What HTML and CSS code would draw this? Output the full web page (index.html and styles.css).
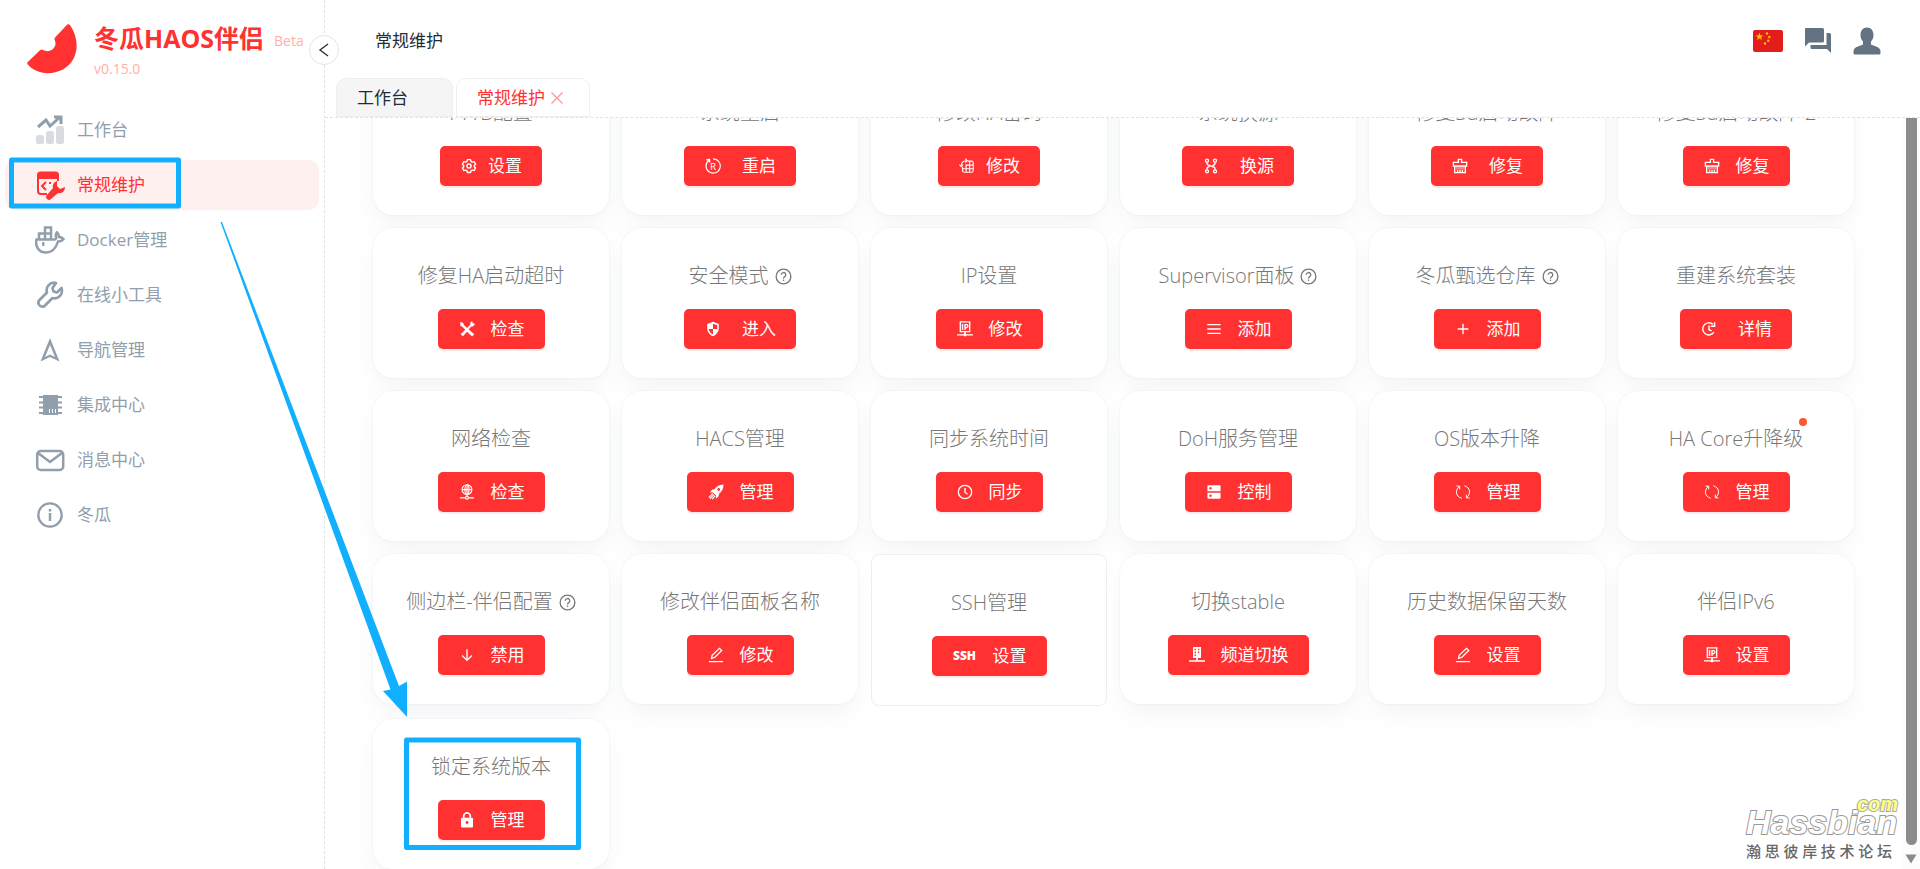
FILE: index.html
```html
<!DOCTYPE html>
<html lang="zh-CN">
<head>
    <meta charset="UTF-8">
    <meta name="viewport" content="width=device-width, initial-scale=1.0">
    <title>冬瓜HAOS伴侣</title>
    <link rel="stylesheet" href="styles.css">
</head>
<body>
    <!-- shared icons -->
    <svg class="sprite" aria-hidden="true">
        <symbol id="i-help" viewBox="0 0 18 18"><g fill="none" stroke="currentColor" stroke-width="1.4"><circle cx="9" cy="9" r="7.8"/><path d="M6.6 7.2a2.4 2.4 0 1 1 3.4 2.2c-.7.4-1 .8-1 1.6"/><path d="M9 12.2v1.5"/></g></symbol>
        <symbol id="i-gear" viewBox="0 0 18 18"><g fill="none" stroke="currentColor" stroke-width="1.6" stroke-linejoin="round"><path d="M7.3 1.8h3.4l.6 2 1.3.8 2.1-.5 1.7 2.9-1.5 1.5v1.2l1.5 1.5-1.7 2.9-2.1-.5-1.3.8-.6 2H7.3l-.6-2-1.3-.8-2.1.5-1.7-2.900 1.500-1.500V8.500L1.600 7l1.700-2.900 2.100.5 1.300-.8z"/><circle cx="9" cy="9" r="2.300"/></g></symbol>
        <symbol id="i-swapgrid" viewBox="0 0 18 18"><g fill="none" stroke="currentColor" stroke-width="1.200"><path d="M10 3.500h4a2 2 0 0 1 2 2V14a2 2 0 0 1-2 2H6a2 2 0 0 1-2-2v-4M4 12h12M8 8h8M8 7v9M12 3.500V16"/><path d="M2.500 9.500c0-4 2-6.500 6-6.500M7 .8L9.400 3 7 5.200M.5 7.500l2 2.300 2-2.300"/></g></symbol>
        <symbol id="i-branch" viewBox="0 0 18 18"><g fill="none" stroke="currentColor" stroke-width="1.500"><circle cx="4.500" cy="3" r="1.700"/><circle cx="13.500" cy="3" r="1.700"/><circle cx="4.500" cy="15" r="1.700"/><circle cx="13.500" cy="15" r="1.700"/><path d="M4.500 4.700v1.500c0 3.300 9 2.300 9 5.600v1.500M13.500 4.700v1.500c0 1.400-1.400 2-3 2.400M4.500 13.300v-1.500c0-1.400 1.400-2 3-2.400"/></g></symbol>
        <symbol id="i-clear" viewBox="0 0 18 18"><path d="M7.200 5V1.500h3.600V5H16.500v4h-15V5zM3 9v7.500h12V9M6.300 16v-2.500M9 16v-2.500M11.700 16v-2.500" fill="none" stroke="currentColor" stroke-width="1.500"/><path d="M4 9h10v4H4z" fill="currentColor" opacity=".4"/></symbol>
        <symbol id="i-tools" viewBox="0 0 18 18"><path d="M1.500 1.500l3 .8.8 2.200L9 8.100l4-4-.2-2.200 2-1.400.4 2.400 2.300.3-1.300 2.500-2.200.2-3.400 3.500 6.200 5.600-2 2.200L9 11.700l-4.600 5.300-2.300-2.100L7.300 9.800 3.700 6.200l-1.800-.8z" fill="currentColor" stroke="currentColor" stroke-width=".5"/></symbol>
        <symbol id="i-shield" viewBox="0 0 18 18"><path fill-rule="evenodd" d="M9 .8l6.500 2.500v4.900c0 4.300-2.800 7.300-6.500 9-3.700-1.700-6.500-4.700-6.500-9V3.300zM9 3v6H4.200c.4 2.900 2.100 4.900 4.800 6.200V9h4.800V4.800z" fill="currentColor"/></symbol>
        <symbol id="i-server" viewBox="0 0 18 18"><path fill-rule="evenodd" d="M4.500 0h9v12.500H10v2.300h8v1.700H0v-1.700h8v-2.300H4.500zM6.300 2v1.700h1.500V2zm0 3.200v1.700h1.500V5.200zm0 3.200v1.700h1.500V8.400zM10 2v1.700h1.500V2zm0 3.200v1.700h1.500V5.200z" fill="currentColor"/></symbol>
        <symbol id="i-menu" viewBox="0 0 18 18"><path d="M1.500 4h15M1.500 9h15M1.500 14h15" stroke="currentColor" stroke-width="1.500"/></symbol>
        <symbol id="i-plus" viewBox="0 0 18 18"><path d="M9 3v12M3 9h12" stroke="currentColor" stroke-width="1.500"/></symbol>
        <symbol id="i-history" viewBox="0 0 18 18"><path d="M14.500 12.500A6.800 6.800 0 1 1 13.300 3.800M15.300 1.500v4.500h-4.500M9 5v4.800l3 1.400" fill="none" stroke="currentColor" stroke-width="1.600"/></symbol>
        <symbol id="i-net" viewBox="0 0 18 18"><g fill="none" stroke="currentColor" stroke-width="1.300"><circle cx="9" cy="6.300" r="5.500"/><ellipse cx="9" cy="6.300" rx="2.300" ry="5.500"/><path d="M3.500 6.300h11M9 .8V14M1 15.600h6.200M10.800 15.600H17"/><circle cx="9" cy="15.500" r="1.600"/></g></symbol>
        <symbol id="i-rocket" viewBox="0 0 18 18"><path fill-rule="evenodd" d="M17.500.5c-4.800.2-8 2-10.200 5.300L4.500 6.500 2 9.500l3.300-.3 3.800 3.700-.3 3.600 3-2.500.7-3C15.600 8.600 17.500 5.200 17.500.5zM12 4.500a1.600 1.600 0 1 0 .1 0z" fill="currentColor"/><path d="M5.500 10.500L1 15M6.500 12L2 16.700M8 13.200L4.700 17" stroke="currentColor" stroke-width="1.400"/></symbol>
        <symbol id="i-clock" viewBox="0 0 18 18"><path d="M9 4.500V9.500l3.200 2" fill="none" stroke="currentColor" stroke-width="1.500"/><circle cx="9" cy="9" r="7.500" fill="none" stroke="currentColor" stroke-width="1.500"/></symbol>
        <symbol id="i-disk" viewBox="0 0 18 18"><path fill-rule="evenodd" d="M2.500 1.500h13a.9.900 0 0 1 .9.900V8.200H1.600V2.400a.9.900 0 0 1 .9-.9zM5 3.500a1.400 1.400 0 1 0 .1 0zM1.600 9.800h14.800v5.800a.9.900 0 0 1-.9.900h-13a.9.900 0 0 1-.9-.9zM5 11.700a1.400 1.400 0 1 0 .1 0z" fill="currentColor"/></symbol>
        <symbol id="i-sync" viewBox="0 0 18 18"><g fill="none" stroke="currentColor" stroke-width="1.100"><path d="M7.500 16C.5 14.500 0 6 5 2.800M10.500 2C17.500 3.500 18 12 13 15.200"/><path d="M1.700 2.300l3.600.2v3.600M16.300 15.700l-3.600-.2v-3.600"/></g></symbol>
        <symbol id="i-down" viewBox="0 0 18 18"><path d="M9 2.500v12.500M3.500 9.500L9 15l5.500-5.500" fill="none" stroke="currentColor" stroke-width="1.500"/></symbol>
        <symbol id="i-edit" viewBox="0 0 18 18"><path d="M4 12.800l.7-3.500 8.200-7.800 2.500 2.500-7.900 7.800zM1 16.500h16" fill="none" stroke="currentColor" stroke-width="1.500"/></symbol>
        <symbol id="i-lock" viewBox="0 0 18 18"><path d="M5.300 8V4.600a3.700 3.700 0 0 1 7.400 0V8" fill="none" stroke="currentColor" stroke-width="1.900"/><path fill-rule="evenodd" d="M3.500 6.500h11a1.300 1.300 0 0 1 1.300 1.300v8.400a1.300 1.300 0 0 1-1.300 1.300h-11a1.300 1.300 0 0 1-1.300-1.300V7.800a1.300 1.300 0 0 1 1.300-1.300zM9 10.200a1.700 1.700 0 1 0 .1 0z" fill="currentColor"/></symbol>
    </svg>

    <div class="app">
        <aside class="sidebar">
            <div class="brand">
                <svg class="logo" viewBox="0 0 50 50"><path d="M40.500.3c1-.3 2 .2 2.600 1C54 17 51 37 36 45.500 23 52 8 49.500.6 40.300c-.6-.8-.5-1.600.2-2.300L13 26.300c1-.9 2.100-.9 3.100-.2C22 29 28 25.500 28.500 20c.1-2-.7-3.500-1-4.500-.2-1 .2-1.800 1-2.600z" fill="#ff3131"/></svg>
                <div>
                    <div class="brand-line"><span class="brand-name">冬瓜HAOS伴侣</span><span class="brand-note">Beta</span></div>
                    <div class="brand-note">v0.15.0</div>
                </div>
            </div>
            <nav class="menu">
                <a href="#"><svg viewBox="0 0 30 30"><path d="M3 12l8-7 4 6 9-8M19 2h7v7" fill="none" stroke="currentColor" stroke-width="3"/><g fill="currentColor" opacity=".35"><rect x="1" y="20" width="8" height="9" rx="2.500"/><rect x="11" y="16" width="8" height="13" rx="2.500"/><rect x="21" y="11" width="8" height="18" rx="2.500"/></g></svg>工作台</a>
                <a href="#" class="active"><svg viewBox="0 0 30 30"><path d="M12 24H6a3 3 0 0 1-3-3V5M23 4v7" fill="none" stroke="currentColor" stroke-width="2"/><path d="M2 9V5a3.500 3.500 0 0 1 3.500-3.500h15A3.500 3.500 0 0 1 24 5v4z" fill="currentColor"/><path d="M11 12l-4 4 4 4M15 12v2" fill="none" stroke="currentColor" stroke-width="2"/><path d="M22 11c-3 1-5 4-4 7l-6 7a2.600 2.600 0 0 0 4 4l7-6c4 1 7-2 7-6l-5 2-3-3z" fill="currentColor"/></svg>常规维护</a>
                <a href="#"><svg viewBox="0 0 30 30"><g fill="none" stroke="currentColor" stroke-width="2.500"><path d="M1.500 14.500H19c1.500 0 2.500-.8 2-2.500-.6-2 0-3.500 1-4.500 1.500 1.500 2 3 2 4.500 2 0 3.500.8 4.500 2-1.200 1.600-3 2.600-5.500 2.500C21 23 17 27.500 11 27.500 3.500 27.500 0 21 1.500 14.500z"/><path d="M4 14V8.500h12V14M10 14V2.500h6v6"/></g><rect x="7" y="17" width="2.500" height="4" rx="1" fill="currentColor"/></svg>Docker管理</a>
                <a href="#"><svg viewBox="0 0 30 30"><path d="M21 3a7.500 7.500 0 0 0-9 9.500L4 20.500a4 4 0 0 0 5.500 5.500l8-8c6 1.500 11-4 9-10l-4.500 4.500-3.500-1-1-3.500z" fill="none" stroke="currentColor" stroke-width="2.700" stroke-linejoin="round"/></svg>在线小工具</a>
                <a href="#"><svg viewBox="0 0 30 30"><path fill-rule="evenodd" d="M15 3l9.500 23.500L15 22l-9.500 4.500zM15 10l-5 12 5-2.500 5 2.500z" fill="currentColor"/></svg>导航管理</a>
                <a href="#"><svg viewBox="0 0 30 30"><path d="M8 5h15v20H8z" fill="currentColor"/><path d="M4 7h23M4 12.500h23M4 17.500h23M4 23h23" stroke="currentColor" stroke-width="2"/><path d="M14.500 19v4M17.500 19v4M20.500 19v4" stroke="#fff" stroke-width="1"/></svg>集成中心</a>
                <a href="#"><svg viewBox="0 0 30 30"><rect x="2.200" y="6" width="26" height="19" rx="3.500" fill="none" stroke="currentColor" stroke-width="2.500"/><path d="M3 8l12 9 12-9" fill="none" stroke="currentColor" stroke-width="2.500"/></svg>消息中心</a>
                <a href="#"><svg viewBox="0 0 30 30"><circle cx="15" cy="15" r="11.700" fill="none" stroke="currentColor" stroke-width="2.300"/><path d="M15 13v8M15 9v2.500" stroke="currentColor" stroke-width="2.500"/></svg>冬瓜</a>
            </nav>
            <button class="collapse" type="button" aria-label="收起菜单"><svg viewBox="0 0 12 14"><path d="M10 1L2 7l8 6" fill="none" stroke="#333" stroke-width="1.400"/></svg></button>
        </aside>

        <main class="main">
            <header class="topbar">
                <span class="page-title">常规维护</span>
                <div class="actions">
                    <button type="button" aria-label="语言"><svg class="flag" viewBox="0 0 30 22"><rect width="30" height="22" rx="2" fill="#e31d1a"/><path d="M6.500 2.500l1 2.900h3L8.100 7.200l.9 2.900-2.500-1.800L4 10.100l.9-2.900-2.400-1.800h3z" fill="#ffc800"/><g fill="#ffc800"><circle cx="14" cy="3.500" r="1.200"/><circle cx="16.300" cy="7" r="1.200"/><circle cx="15.300" cy="10.700" r="1.200"/><circle cx="12" cy="13.500" r="1.200"/></g></svg></button>
                    <button type="button" aria-label="消息"><svg viewBox="0 0 28 28"><path d="M1.500 1h17a1.500 1.500 0 0 1 1.500 1.500v11.500a1.500 1.500 0 0 1-1.500 1.500H5L1 19.500V2zM22.500 6h3A1.500 1.500 0 0 1 27 7.500V26l-4-4H8a1.500 1.500 0 0 1-1.500-1.500V18h16z" fill="#637381"/></svg></button>
                    <button type="button" aria-label="账户"><svg viewBox="0 0 28 28"><path d="M14 .5c4 0 6.500 3 6.500 7.500 0 2.800-1 4.800-2.500 6.500v3c2.500 1.500 9 2 9.500 6.500v2a1.500 1.500 0 0 1-1.500 1.500H2A1.500 1.500 0 0 1 .5 26v-2c.5-4.500 7-5 9.500-6.500v-3C8.500 12.800 7.500 10.800 7.500 8c0-4.500 2.500-7.500 6.500-7.500z" fill="#637381"/></svg></button>
                </div>
            </header>
            <div class="tabs">
                <a href="#" class="tab home">工作台</a>
                <a href="#" class="tab current">常规维护<svg viewBox="0 0 12 12"><path d="M.5.5l11 11M11.500.5l-11 11" stroke="#ff9898" stroke-width="1.300"/></svg></a>
            </div>
            <div class="body">
                <div class="scroll">
                    <div class="grid">
                        <section class="card"><h2>FTTB配置</h2><button class="btn tight" type="button"><svg><use href="#i-gear"/></svg>设置</button></section>
                        <section class="card"><h2>系统重启</h2><button class="btn wide" type="button"><svg viewBox="0 0 18 18"><path d="M4.500 2.500A8 8 0 1 0 9 1M1.200 2.200l3.800-.8.500 3.800" fill="none" stroke="currentColor" stroke-width="1.300"/><text x="9" y="13" font-size="11" text-anchor="middle" fill="currentColor">R</text></svg>重启</button></section>
                        <section class="card"><h2>修改HA密码</h2><button class="btn tight" type="button"><svg><use href="#i-swapgrid"/></svg>修改</button></section>
                        <section class="card"><h2>系统换源</h2><button class="btn wide" type="button"><svg><use href="#i-branch"/></svg>换源</button></section>
                        <section class="card"><h2>修复Sd启动故障</h2><button class="btn wide" type="button"><svg><use href="#i-clear"/></svg>修复</button></section>
                        <section class="card"><h2>修复Sd启动故障-2</h2><button class="btn" type="button"><svg><use href="#i-clear"/></svg>修复</button></section>

                        <section class="card"><h2>修复HA启动超时</h2><button class="btn" type="button"><svg><use href="#i-tools"/></svg>检查</button></section>
                        <section class="card"><h2>安全模式<svg><use href="#i-help"/></svg></h2><button class="btn wide" type="button"><svg><use href="#i-shield"/></svg>进入</button></section>
                        <section class="card"><h2>IP设置</h2><button class="btn" type="button"><svg viewBox="0 0 18 18"><path d="M3.700 1h10.600v11H3.700z" fill="none" stroke="currentColor" stroke-width="1.500"/><path d="M8 12h2v2.800h8v1.600H0v-1.600h8z" fill="currentColor"/><circle cx="9" cy="15.800" r="1.600" fill="currentColor"/><text x="9" y="10" font-size="9" font-weight="700" text-anchor="middle" fill="currentColor">IP</text></svg>修改</button></section>
                        <section class="card"><h2>Supervisor面板<svg><use href="#i-help"/></svg></h2><button class="btn" type="button"><svg><use href="#i-menu"/></svg>添加</button></section>
                        <section class="card"><h2>冬瓜甄选仓库<svg><use href="#i-help"/></svg></h2><button class="btn" type="button"><svg><use href="#i-plus"/></svg>添加</button></section>
                        <section class="card"><h2>重建系统套装</h2><button class="btn wide" type="button"><svg><use href="#i-history"/></svg>详情</button></section>

                        <section class="card"><h2>网络检查</h2><button class="btn" type="button"><svg><use href="#i-net"/></svg>检查</button></section>
                        <section class="card"><h2>HACS管理</h2><button class="btn" type="button"><svg><use href="#i-rocket"/></svg>管理</button></section>
                        <section class="card"><h2>同步系统时间</h2><button class="btn" type="button"><svg><use href="#i-clock"/></svg>同步</button></section>
                        <section class="card"><h2>DoH服务管理</h2><button class="btn" type="button"><svg><use href="#i-disk"/></svg>控制</button></section>
                        <section class="card"><h2>OS版本升降</h2><button class="btn" type="button"><svg><use href="#i-sync"/></svg>管理</button></section>
                        <section class="card"><h2 class="dot">HA Core升降级</h2><button class="btn" type="button"><svg><use href="#i-sync"/></svg>管理</button></section>

                        <section class="card"><h2>侧边栏-伴侣配置<svg><use href="#i-help"/></svg></h2><button class="btn" type="button"><svg><use href="#i-down"/></svg>禁用</button></section>
                        <section class="card"><h2>修改伴侣面板名称</h2><button class="btn" type="button"><svg><use href="#i-edit"/></svg>修改</button></section>
                        <section class="card outlined"><h2>SSH管理</h2><button class="btn" type="button"><span class="ssh">SSH</span>设置</button></section>
                        <section class="card"><h2>切换stable</h2><button class="btn" type="button"><svg><use href="#i-server"/></svg>频道切换</button></section>
                        <section class="card"><h2>历史数据保留天数</h2><button class="btn" type="button"><svg><use href="#i-edit"/></svg>设置</button></section>
                        <section class="card"><h2>伴侣IPv6</h2><button class="btn" type="button"><svg viewBox="0 0 18 18"><path d="M3.700 1h10.600v11H3.700z" fill="none" stroke="currentColor" stroke-width="1.500"/><path d="M8 12h2v2.800h8v1.600H0v-1.600h8z" fill="currentColor"/><circle cx="9" cy="15.800" r="1.600" fill="currentColor"/><text x="9" y="10" font-size="9" font-weight="700" text-anchor="middle" fill="currentColor">IP</text></svg>设置</button></section>

                        <section class="card"><h2>锁定系统版本</h2><button class="btn" type="button"><svg><use href="#i-lock"/></svg>管理</button></section>
                    </div>
                </div>
                <div class="scrollbar">
                    <div class="thumb"></div>
                    <svg viewBox="0 0 12 10"><path d="M.5.500h11L6 9.500z" fill="#8b8b8b"/></svg>
                </div>
            </div>
        </main>
    </div>

    <!-- hints drawn over the page -->
    <svg class="hints" viewBox="0 0 600 869" aria-hidden="true">
        <g fill="none" stroke="#12afff" stroke-width="5" stroke-linejoin="round">
            <rect x="11.500" y="160" width="167" height="46"/>
            <rect x="406.500" y="740" width="172" height="107.500"/>
        </g>
        <path d="M220.500 222h1.500l177 464 8-4.500V717l-24-26 7.500-1.500z" fill="#12afff"/>
    </svg>

    <div class="watermark" lang="zh-CN">
        <span class="wm-com">com</span>
        <div class="wm-name">Hassbian</div>
        <div class="wm-sub">瀚思彼岸技术论坛</div>
    </div>
</body>
</html>
```
FILE: styles.css
```css
* {
    box-sizing: border-box;
}
body {
    margin: 0;
    font-family: "Open Sans", "Noto Sans CJK SC", sans-serif;
    font-size: 17px;
    line-height: 24px;
    color: #212b36;
    background: #fff;
}
a {
    color: inherit;
    text-decoration: none;
}
button {
    font: inherit;
    border: none;
    padding: 0;
    cursor: pointer;
}
.sprite {
    position: absolute;
    width: 0;
    height: 0;
}
.app {
    display: flex;
    height: 100vh;
    overflow: hidden;
}

/* sidebar */
.sidebar {
    position: relative;
    flex: 0 0 325px;
    border-right: 1px dashed #dfe3e8;
}
.brand {
    display: flex;
    gap: 17px;
    height: 105px;
    padding: 19px 0 0 27px;
}
.logo {
    width: 50px;
    height: 50px;
    margin-top: 5px;
}
.brand-line {
    display: flex;
    align-items: center;
    gap: 10px;
    height: 38px;
}
.brand-name {
    font-size: 25px;
    font-weight: 700;
    color: #ff3131;
}
.brand-note {
    font-size: 14px;
    color: #ffb0a8;
}
.brand-line .brand-note {
    padding-top: 6px;
}
.menu {
    display: flex;
    flex-direction: column;
    gap: 5px;
    padding: 0 5px;
}
.menu a {
    display: flex;
    align-items: center;
    gap: 12px;
    height: 50px;
    padding-left: 30px;
    border-radius: 10px;
    color: #919eab;
}
.menu svg {
    width: 30px;
    height: 30px;
}
.menu .active {
    color: #ff3131;
    background: #fff0f0;
}
.collapse {
    position: absolute;
    top: 35px;
    right: -15px;
    z-index: 2;
    display: flex;
    align-items: center;
    justify-content: center;
    width: 30px;
    height: 30px;
    border: 1px solid #e5e5e5;
    border-radius: 50%;
    background: #fff;
}
.collapse svg {
    width: 12px;
    height: 14px;
}

/* main */
.main {
    flex: 1;
    min-width: 0;
    display: flex;
    flex-direction: column;
}
.topbar {
    display: flex;
    align-items: center;
    justify-content: space-between;
    height: 78px;
    padding: 4px 39px 0 50px;
}
.actions {
    display: flex;
    align-items: center;
    gap: 21px;
}
.actions button {
    display: flex;
    background: none;
}
.actions svg {
    width: 28px;
    height: 28px;
}
.actions .flag {
    width: 30px;
    height: 22px;
}
.tabs {
    display: flex;
    gap: 3px;
    height: 40px;
    padding-left: 11px;
    border-bottom: 1px dashed #dfe3e8;
}
.tab {
    display: flex;
    align-items: center;
    gap: 6px;
    padding: 0 26px 0 20px;
    border: 1px solid #eee;
    border-radius: 10px 10px 0 0;
}
.home {
    min-width: 117px;
    background: #f5f5f5;
}
.current {
    color: #ff3131;
    background: #fff;
}
.tab svg {
    width: 12px;
    height: 12px;
}
.body {
    flex: 1;
    min-height: 0;
    display: flex;
}
.scroll {
    flex: 1;
    min-width: 0;
    display: flex;
    flex-direction: column;
    justify-content: flex-end;
    overflow: hidden;
    padding: 0 48px;
}
.grid {
    display: grid;
    grid-template-columns: repeat(6, 1fr);
    align-items: start;
    gap: 13px;
}
.card {
    display: flex;
    flex-direction: column;
    align-items: center;
    gap: 18px;
    padding: 33px 0 29px;
    border-radius: 20px;
    background: #fff;
    box-shadow: 0 0 2px rgba(145, 158, 171, 0.2), 0 12px 24px -4px rgba(145, 158, 171, 0.12);
}
.outlined {
    border: 1px solid #eee;
    border-radius: 8px;
    box-shadow: none;
}
.card h2 {
    position: relative;
    display: flex;
    align-items: center;
    gap: 6px;
    margin: 0;
    font-size: 20px;
    font-weight: 300;
    line-height: 30px;
    color: #777;
}
.card h2 svg {
    width: 17px;
    height: 17px;
}
.dot::after {
    content: "";
    position: absolute;
    top: -6px;
    right: -4px;
    width: 8px;
    height: 8px;
    border-radius: 50%;
    background: #ff5630;
}
.btn {
    display: flex;
    align-items: center;
    gap: 15px;
    height: 40px;
    padding: 0 20px;
    border-radius: 5px;
    color: #fff;
    background: #ff3131;
    box-shadow: 0 2px 0 rgba(255, 49, 49, 0.1);
}
.btn svg {
    width: 18px;
    height: 16px;
}
.tight {
    gap: 10px;
}
.wide {
    gap: 20px;
}
.ssh {
    min-width: 26px;
    font-family: "Noto Sans", sans-serif;
    font-size: 12px;
    font-weight: 900;
}
.scrollbar {
    display: flex;
    flex-direction: column;
    align-items: center;
    gap: 9px;
    width: 18px;
    padding-bottom: 5px;
    background: #fcfcfc;
}
.thumb {
    flex: 1;
    width: 11px;
    border-radius: 0 0 6px 6px;
    background: #8b8b8b;
}
.scrollbar svg {
    width: 12px;
    height: 10px;
}

/* overlays */
.hints {
    position: absolute;
    top: 0;
    left: 0;
    width: 600px;
    height: 869px;
    pointer-events: none;
}
.watermark {
    position: absolute;
    right: 28px;
    bottom: 6px;
    width: 146px;
    color: #666;
}
.wm-name {
    font: italic 700 34px/34px "Liberation Sans", sans-serif;
    color: #fff;
    -webkit-text-stroke: 2px #999;
    paint-order: stroke fill;
}
.wm-com {
    position: absolute;
    top: -11px;
    right: -6px;
    font: italic 700 20px/20px "Liberation Sans", sans-serif;
    color: #ffff80;
    -webkit-text-stroke: 2px #aaa;
    paint-order: stroke fill;
}
.wm-sub {
    font-size: 15px;
    font-weight: 500;
    text-align-last: justify;
}
```
